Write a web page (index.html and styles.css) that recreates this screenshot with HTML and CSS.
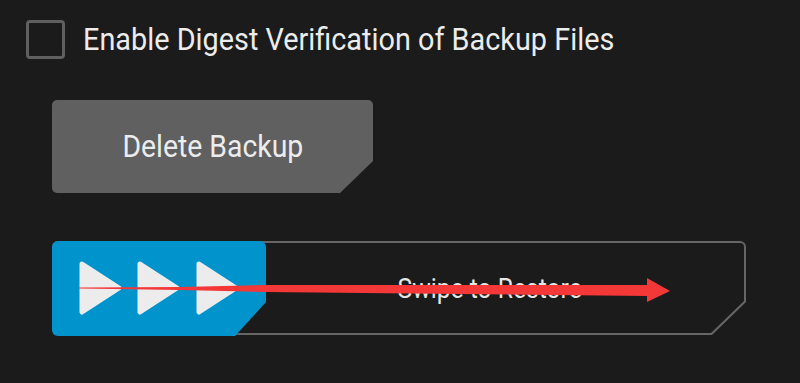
FILE: index.html
```html
<!DOCTYPE html>
<html lang="en">
<head>
  <meta charset="UTF-8" />
  <title>Restore</title>
  <link rel="stylesheet" href="styles.css">
</head>
<body>

  <!-- Option -->
  <label class="option">
    <span class="checkbox"></span>
    <span class="option-text"><span class="narrow">Enable Digest Verification of Backup Files</span></span>
  </label>

  <div class="actions">
    <button class="delete-button"><span class="narrow">Delete Backup</span></button>

    <!-- Swipe slider -->
    <div class="slider">
      <div class="track">
        <div class="track-inner">
          <span class="track-label"><span class="narrow">Swipe to Restore</span></span>
        </div>
      </div>
      <div class="thumb">
        <svg width="214" height="95" viewBox="0 0 214 95">
          <g fill="#ececec" stroke="#ececec" stroke-width="5" stroke-linejoin="round">
            <polygon points="30,23 67,47 30,71" />
            <polygon points="88,23 125,47 88,71" />
            <polygon points="147,23 184,47 147,71" />
          </g>
        </svg>
      </div>
    </div>
  </div>

  <!-- annotation arrow drawn over the screen -->
  <svg class="annotation" width="800" height="383" viewBox="0 0 800 383">
    <polygon fill="#f43838" points="79,287.6 180,287 265,285 647,285 647,278 670,291 647,302 647,296 265,292 180,290 79,288.6" />
  </svg>

</body>
</html>
```

FILE: styles.css
```css
* {
  box-sizing: border-box;
}

body {
  margin: 0;
  height: 383px;
  overflow: hidden;
  background: #1b1b1b;
  font-family: Roboto, 'Noto Sans', sans-serif;
  color: #ececec;
  position: relative;
}

.narrow {
  display: inline-block;
  transform: scaleX(0.86);
  transform-origin: center;
  white-space: nowrap;
}

.option {
  display: flex;
  align-items: center;
  gap: 18px;
  padding: 20px 0 0 26px;
  height: 59px;
}

.checkbox {
  width: 39px;
  height: 39px;
  border: 3px solid #5f5f5f;
  border-radius: 4px;
  flex-shrink: 0;
}

.option-text {
  font-size: 31px;
  line-height: 39px;
}

.option-text .narrow {
  transform: scaleX(0.93);
  transform-origin: left center;
}

.actions {
  padding: 41px 0 0 52px;
  width: 746px;
}

.delete-button {
  display: flex;
  align-items: center;
  justify-content: center;
  width: 321px;
  height: 93px;
  border: none;
  border-radius: 5px;
  background: #606060;
  color: #ececec;
  font-family: inherit;
  font-size: 31px;
  padding: 0;
  clip-path: polygon(0 0, 100% 0, 100% calc(100% - 32px), calc(100% - 33px) 100%, 0 100%);
}

.delete-button .narrow {
  transform: scaleX(0.915);
}

.slider {
  display: grid;
  margin-top: 48px;
  height: 95px;
}

.track,
.thumb {
  grid-area: 1 / 1;
}

.track {
  background: #666666;
  border-radius: 6px;
  padding: 2px;
  height: 94px;
  clip-path: polygon(0 0, 100% 0, 100% calc(100% - 33px), calc(100% - 34px) 100%, 0 100%);
}

.track-inner {
  display: flex;
  align-items: center;
  justify-content: center;
  height: 100%;
  background: #1b1b1b;
  border-radius: 4px;
  padding: 0 30px 0 212px;
  clip-path: polygon(0 0, 100% 0, 100% calc(100% - 32px), calc(100% - 33px) 100%, 0 100%);
}

.track-label {
  font-size: 28px;
  color: #e6e6e6;
}

.track-label .narrow {
  transform: scaleX(0.88);
}

.thumb {
  justify-self: start;
  width: 214px;
  height: 95px;
  background: #0093cc;
  border-radius: 6px;
  clip-path: polygon(0 0, 100% 0, 100% calc(100% - 34px), calc(100% - 31px) 100%, 0 100%);
}

.thumb svg {
  display: block;
}

.annotation {
  position: absolute;
  left: 0;
  top: 0;
  pointer-events: none;
}
```
